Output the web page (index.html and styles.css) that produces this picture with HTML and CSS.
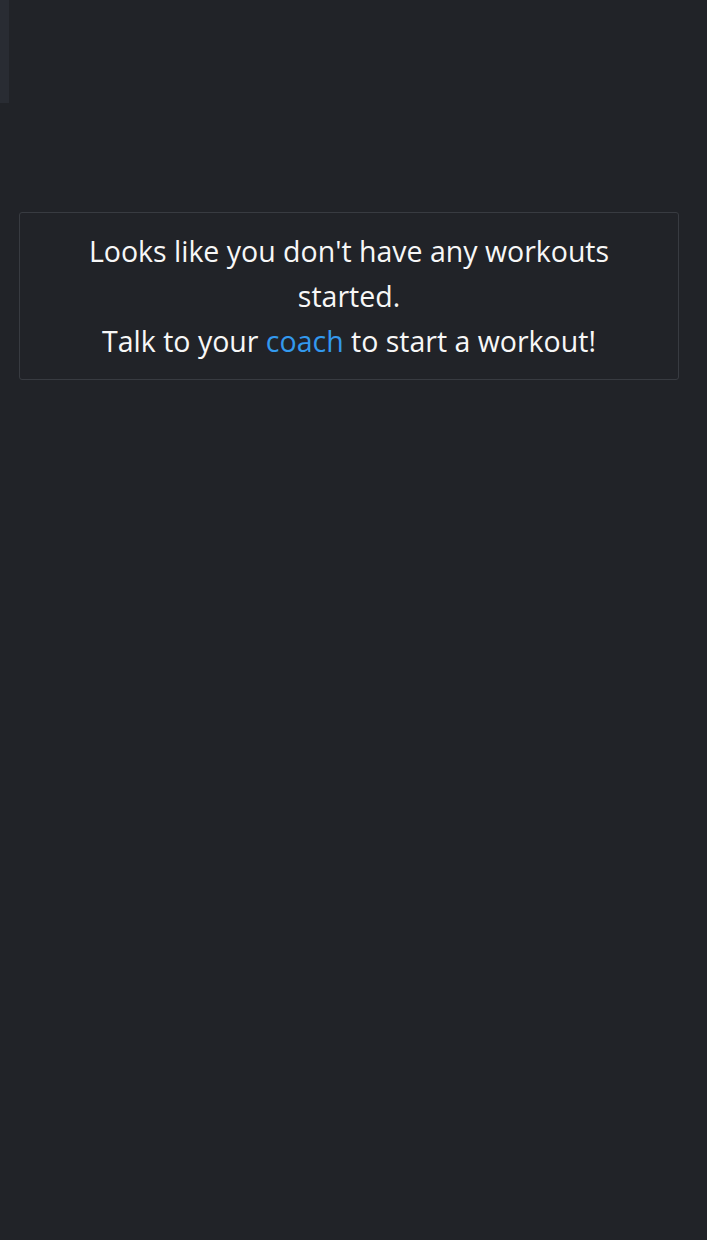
FILE: index.html
```html
<!DOCTYPE html>
<html lang="en">
<head>
<meta charset="utf-8">
<title>Workouts</title>
<link rel="stylesheet" href="styles.css">
</head>
<body>
<div class="page">
  <aside class="side-strip"></aside>
  <main class="content">
    <div class="empty-card">
      <p class="empty-text">Looks like you don't have any workouts started.<br>Talk to your <a class="coach-link" href="#">coach</a> to start a workout!</p>
    </div>
  </main>
</div>
</body>
</html>
```

FILE: styles.css
```css
html, body {
  margin: 0;
  padding: 0;
  background: #212328;
  height: 100%;
}
body {
  font-family: "Open Sans", "Noto Sans", sans-serif;
  color: #f7f7f7;
}
.page {
  position: relative;
  min-height: 1240px;
}
.side-strip {
  position: absolute;
  left: 0;
  top: 0;
  width: 9px;
  height: 103px;
  background: #292c33;
}
.content {
  padding: 212px 28px 0 19px;
}
.empty-card {
  border: 1px solid #383b41;
  border-radius: 3px;
  padding: 16px 40px 15px;
}
.empty-text {
  margin: 0;
  text-align: center;
  font-size: 28.5px;
  line-height: 45px;
}
.coach-link {
  color: #3399ee;
  text-decoration: none;
}
```
